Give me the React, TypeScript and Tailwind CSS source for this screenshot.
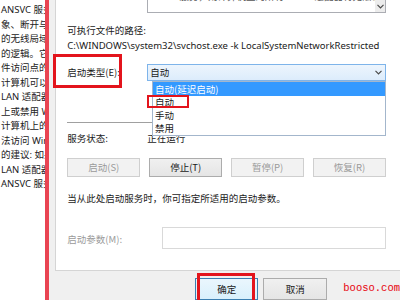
const leftLines = [
  "ANSVC 服务",
  "象、断开与无",
  "的无线局域网",
  "的逻辑。它还",
  "件访问点的功",
  "计算机可以作",
  "LAN 适配器",
  "上或禁用 WL",
  "计算机上的所",
  "法访问 Wind",
  "的建议: 如果",
  "LAN 适配器",
  "ANSVC 服务",
];

function Chevron() {
  return (
    <svg width="7" height="5" viewBox="0 0 7 5" className="block">
      <path d="M0.5 0.8 L3.5 3.8 L6.5 0.8" fill="none" stroke="#4a4a4a" strokeWidth="1.2" />
    </svg>
  );
}

export default function App() {
  return (
    <div className="relative w-[400px] h-[300px] overflow-hidden flex bg-[#f0f0f0] font-['Noto_Sans_CJK_SC','Noto_Sans',sans-serif] text-[9.5px] text-[#1a1a1a]">
      {/* left clipped description column */}
      <div className="w-[49px] bg-white overflow-hidden pt-[3px] font-['Noto_Sans','Noto_Sans_CJK_SC',sans-serif] text-[9.5px] leading-[14.5px] text-[#222]">
        {leftLines.map((l, i) => (
          <div key={i} className="whitespace-nowrap pl-[1px]">
            {l}
          </div>
        ))}
      </div>
      <div className="w-[4px] bg-[#e94452]" />
      <div className="w-[7px] bg-[#f0f0f0]" />

      <div className="flex-1 flex flex-col">
        <div className="h-[276px] bg-white border-l border-b border-[#d5d5d5] flex flex-col pl-[11px] pr-[14px]">
          {/* description box */}
          <div className="ml-[80px] h-[13px] relative border-x border-b border-[#abadb3] overflow-hidden">
            <div className="absolute left-[3px] top-[-11px] whitespace-nowrap text-[#555]">
              WLAN 服务，则计算机上的所有 WLAN 适配器将无法访问
            </div>
            <div className="absolute right-0 top-0 w-[10px] h-full bg-[#ececec] flex items-center justify-center">
              <Chevron />
            </div>
          </div>
          <div className="mt-[10px] h-[14px] leading-[14px]">可执行文件的路径:</div>
          <div className="mt-[2px] h-[14px] leading-[14px] whitespace-nowrap font-['Noto_Sans','Noto_Sans_CJK_SC',sans-serif]">
            C:\WINDOWS\system32\svchost.exe -k LocalSystemNetworkRestricted
          </div>
          <div className="mt-[11px] h-[17px] flex items-center">
            <div className="w-[80px]">启动类型(E):</div>
            <div className="flex-1 h-full border border-[#7eb4ea] bg-gradient-to-b from-[#edf5fd] to-[#dcecfc] flex items-center justify-between pl-[2px] pr-[3px]">
              <span>自动</span>
              <Chevron />
            </div>
          </div>
          <div className="mt-[41px] h-px bg-[#a0a0a0]" />
          <div className="mt-[8px] h-[14px] flex items-center">
            <div className="w-[80px]">服务状态:</div>
            <div>正在运行</div>
          </div>
          <div className="mt-[13px] h-[19px] flex justify-between">
            <div className="w-[73px] border border-[#cfcfcf] bg-[#f2f2f2] text-[#9a9a9a] flex items-center justify-center">启动(S)</div>
            <div className="w-[73px] border border-[#acacac] bg-gradient-to-b from-[#f0f0f0] to-[#e5e5e5] flex items-center justify-center">停止(T)</div>
            <div className="w-[73px] border border-[#cfcfcf] bg-[#f2f2f2] text-[#9a9a9a] flex items-center justify-center">暂停(P)</div>
            <div className="w-[73px] border border-[#cfcfcf] bg-[#f2f2f2] text-[#9a9a9a] flex items-center justify-center">恢复(R)</div>
          </div>
          <div className="mt-[14px] h-[14px] leading-[14px] whitespace-nowrap">
            当从此处启动服务时，你可指定所适用的启动参数。
          </div>
          <div className="mt-[22px] h-[22px] flex items-center">
            <div className="w-[95px] text-[#9a9a9a] pt-[3px]">启动参数(M):</div>
            <div className="flex-1 h-full border border-[#d9d9d9] bg-white" />
          </div>
        </div>
        <div className="flex-1 flex items-start pt-[7px] pl-[140px]">
          <div className="w-[63px] h-[22px] border border-[#3c7fb1] bg-gradient-to-b from-[#eaf6fd] to-[#d9f0fc] flex items-center justify-center">确定</div>
          <div className="ml-[5px] w-[64px] h-[22px] border border-[#acacac] bg-gradient-to-b from-[#f0f0f0] to-[#e5e5e5] flex items-center justify-center">取消</div>
          <div className="ml-[16px] mt-[3px] font-['Liberation_Mono',monospace] text-[10.5px] text-red-600 whitespace-nowrap">booso.com</div>
        </div>
      </div>

      {/* open dropdown list */}
      <div className="absolute left-[152px] top-[81px] w-[234px] h-[55px] bg-white border border-[#a3b6cc] flex flex-col">
        <div className="h-[14px] bg-[#3399ff] text-white pl-[2px] flex items-center">自动(延迟启动)</div>
        <div className="h-[13px] pl-[2px] flex items-center">自动</div>
        <div className="h-[13px] pl-[2px] flex items-center">手动</div>
        <div className="h-[13px] pl-[2px] flex items-center">禁用</div>
      </div>

      {/* red annotation boxes */}
      <div className="absolute left-[53px] top-[54px] w-[69px] h-[34px] border-[3px] border-[#e3141c]" />
      <div className="absolute left-[147px] top-[95px] w-[42px] h-[13px] border-2 border-[#e3141c]" />
      <div className="absolute left-[197px] top-[273px] w-[58px] h-[30px] border-[3px] border-[#e3141c]" />
    </div>
  );
}
